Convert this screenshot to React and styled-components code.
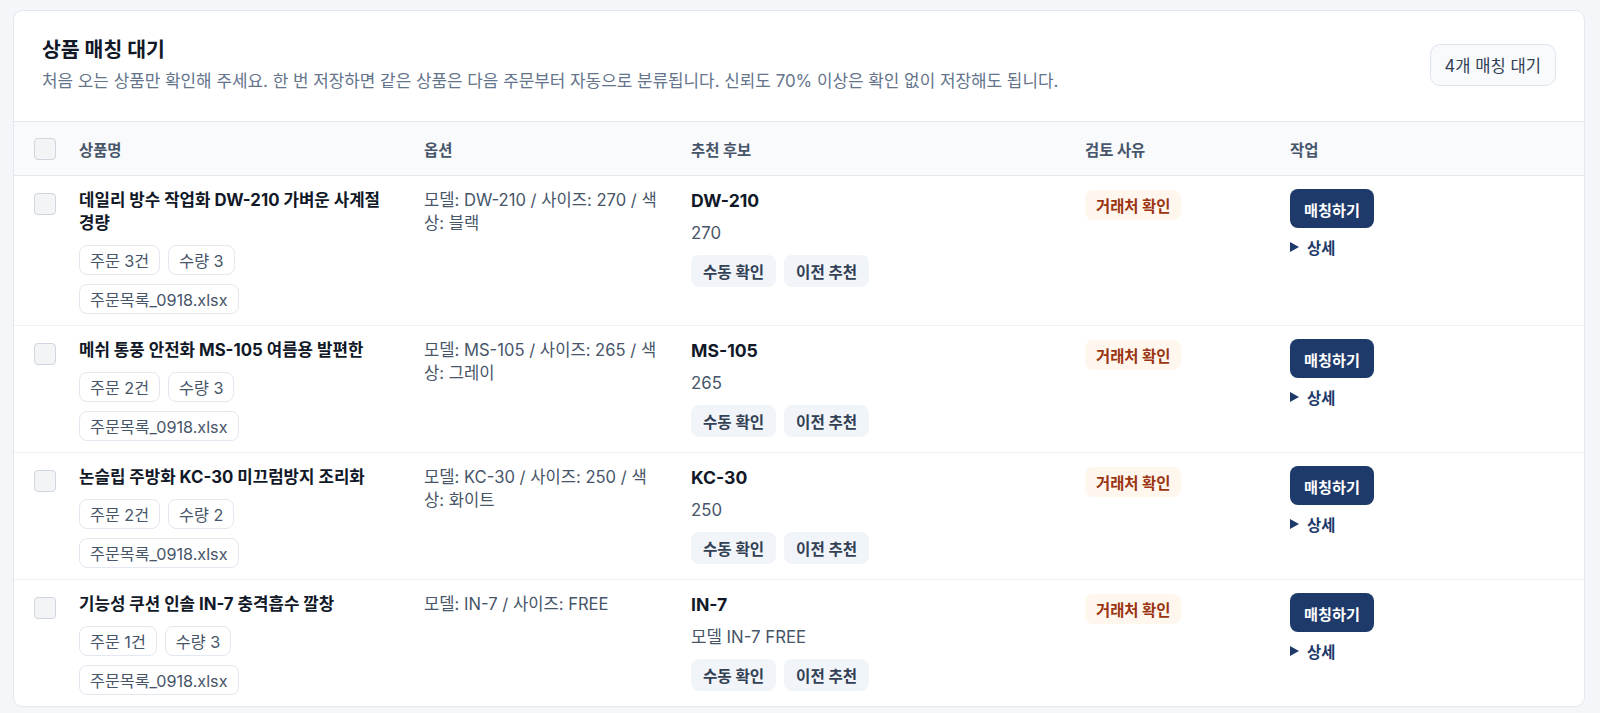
import React from "react";
import styled, { createGlobalStyle } from "styled-components";

const GlobalStyle = createGlobalStyle`
  * { box-sizing: border-box; }
  body {
    margin: 0;
    background: #f4f6f9;
    font-family: Inter, "Noto Sans CJK KR", "Noto Sans", sans-serif;
    color: #111827;
  }
`;

const Page = styled.div`
  padding: 10px 15px 9px 13px;
`;

const Card = styled.section`
  background: #ffffff;
  border: 1px solid #e2e8f0;
  border-radius: 10px;
  overflow: hidden;
`;

const Header = styled.header`
  display: flex;
  align-items: center;
  justify-content: space-between;
  padding: 25px 28px 28px 28px;
  border-bottom: 1px solid #e2e8f0;
`;

const Title = styled.h2`
  margin: 0;
  font-size: 20.5px;
  line-height: 28px;
  font-weight: 700;
  color: #111827;
`;

const Subtitle = styled.p`
  margin: 5px 0 0;
  font-size: 16.9px;
  line-height: 24px;
  color: #64748b;
`;

const CountBadge = styled.div`
  height: 42px;
  padding: 0 14px;
  display: flex;
  align-items: center;
  border: 1px solid #dfe5ee;
  background: #f8fafc;
  border-radius: 10px;
  font-size: 16.6px;
  color: #334155;
`;

const Row = styled.div`
  display: grid;
  grid-template-columns: 45px 345px 267px 394px 205px 1fr;
  padding-left: 20px;
  border-bottom: ${(p) => (p.$last ? "none" : "1px solid #edf0f4")};
  background: ${(p) => (p.$head ? "#f8fafc" : "#ffffff")};
  align-items: ${(p) => (p.$head ? "center" : "start")};
  padding-top: ${(p) => (p.$head ? "0" : "13px")};
  padding-bottom: ${(p) => (p.$head ? "0" : "11px")};
  min-height: ${(p) => (p.$head ? "54px" : "auto")};
  border-bottom-color: ${(p) => (p.$head ? "#e2e8f0" : "#edf0f4")};
`;

const HeadCell = styled.div`
  font-size: 15.4px;
  font-weight: 700;
  color: #475569;
`;

const Checkbox = styled.span`
  display: block;
  width: 22px;
  height: 22px;
  border: 1px solid #cfd6df;
  border-radius: 4px;
  background: #f3f4f6;
  margin-top: ${(p) => (p.$head ? "0" : "4px")};
`;

const Cell = styled.div`
  padding-right: 20px;
  min-width: 0;
`;

const Name = styled.div`
  font-size: 16.8px;
  line-height: 23px;
  font-weight: 700;
  color: #111827;
  max-width: 318px;
`;

const Tags = styled.div`
  display: flex;
  flex-wrap: wrap;
  column-gap: 8px;
  row-gap: 9px;
  margin-top: 10px;
  max-width: 316px;
`;

const Tag = styled.span`
  height: 30px;
  padding: 0 10px;
  display: inline-flex;
  align-items: center;
  border: 1px solid #e2e8f0;
  border-radius: 8px;
  font-size: 16.2px;
  color: #475569;
  background: #fff;
`;

const OptionText = styled.div`
  font-size: 16.6px;
  line-height: 23px;
  color: #475569;
  max-width: 240px;
`;

const Candidate = styled.div`
  font-size: 17.6px;
  line-height: 24px;
  font-weight: 700;
  color: #111827;
`;

const CandidateSub = styled.div`
  font-size: 16.8px;
  line-height: 24px;
  color: #475569;
  margin-top: 8px;
`;

const Chips = styled.div`
  display: flex;
  gap: 8px;
  margin-top: 10px;
`;

const Chip = styled.span`
  height: 32px;
  padding: 0 12px;
  display: inline-flex;
  align-items: center;
  border-radius: 8px;
  background: #f1f5f9;
  font-size: 15.6px;
  font-weight: 700;
  color: #334155;
`;

const Reason = styled.span`
  display: inline-flex;
  align-items: center;
  height: 30px;
  margin-top: 1px;
  padding: 0 11px;
  border-radius: 8px;
  background: #fff7ed;
  color: #9a3412;
  font-size: 15.4px;
  font-weight: 700;
`;

const Actions = styled.div`
  display: flex;
  flex-direction: column;
  align-items: flex-start;
  gap: 8px;
`;

const MatchButton = styled.button`
  height: 39px;
  padding: 0 14px;
  border: none;
  border-radius: 8px;
  background: #1e3a6b;
  color: #ffffff;
  font-family: inherit;
  font-size: 15.2px;
  font-weight: 700;
  cursor: pointer;
`;

const Detail = styled.div`
  display: flex;
  align-items: center;
  gap: 8px;
  height: 22px;
  font-size: 15.4px;
  font-weight: 700;
  color: #1e3a6b;
  &::before {
    content: "";
    width: 0;
    height: 0;
    border-top: 5px solid transparent;
    border-bottom: 5px solid transparent;
    border-left: 9px solid #1e3a6b;
  }
`;

const items = [
  {
    name: "데일리 방수 작업화 DW-210 가벼운 사계절 경량",
    orders: "주문 3건",
    qty: "수량 3",
    option: "모델: DW-210 / 사이즈: 270 / 색상: 블랙",
    model: "DW-210",
    sub: "270",
  },
  {
    name: "메쉬 통풍 안전화 MS-105 여름용 발편한",
    orders: "주문 2건",
    qty: "수량 3",
    option: "모델: MS-105 / 사이즈: 265 / 색상: 그레이",
    model: "MS-105",
    sub: "265",
  },
  {
    name: "논슬립 주방화 KC-30 미끄럼방지 조리화",
    orders: "주문 2건",
    qty: "수량 2",
    option: "모델: KC-30 / 사이즈: 250 / 색상: 화이트",
    model: "KC-30",
    sub: "250",
  },
  {
    name: "기능성 쿠션 인솔 IN-7 충격흡수 깔창",
    orders: "주문 1건",
    qty: "수량 3",
    option: "모델: IN-7 / 사이즈: FREE",
    model: "IN-7",
    sub: "모델 IN-7 FREE",
  },
];

export default function App() {
  return (
    <Page>
      <GlobalStyle />
      <Card>
        <Header>
          <div>
            <Title>상품 매칭 대기</Title>
            <Subtitle>
              처음 오는 상품만 확인해 주세요. 한 번 저장하면 같은 상품은 다음 주문부터 자동으로 분류됩니다. 신뢰도 70% 이상은 확인 없이 저장해도 됩니다.
            </Subtitle>
          </div>
          <CountBadge>4개 매칭 대기</CountBadge>
        </Header>

        <Row $head>
          <Checkbox $head />
          <HeadCell>상품명</HeadCell>
          <HeadCell>옵션</HeadCell>
          <HeadCell>추천 후보</HeadCell>
          <HeadCell>검토 사유</HeadCell>
          <HeadCell>작업</HeadCell>
        </Row>

        {items.map((it, i) => (
          <Row key={it.model} $last={i === items.length - 1}>
            <Checkbox />
            <Cell>
              <Name>{it.name}</Name>
              <Tags>
                <Tag>{it.orders}</Tag>
                <Tag>{it.qty}</Tag>
                <Tag>주문목록_0918.xlsx</Tag>
              </Tags>
            </Cell>
            <Cell>
              <OptionText>{it.option}</OptionText>
            </Cell>
            <Cell>
              <Candidate>{it.model}</Candidate>
              <CandidateSub>{it.sub}</CandidateSub>
              <Chips>
                <Chip>수동 확인</Chip>
                <Chip>이전 추천</Chip>
              </Chips>
            </Cell>
            <Cell>
              <Reason>거래처 확인</Reason>
            </Cell>
            <Actions>
              <MatchButton>매칭하기</MatchButton>
              <Detail>상세</Detail>
            </Actions>
          </Row>
        ))}
      </Card>
    </Page>
  );
}
